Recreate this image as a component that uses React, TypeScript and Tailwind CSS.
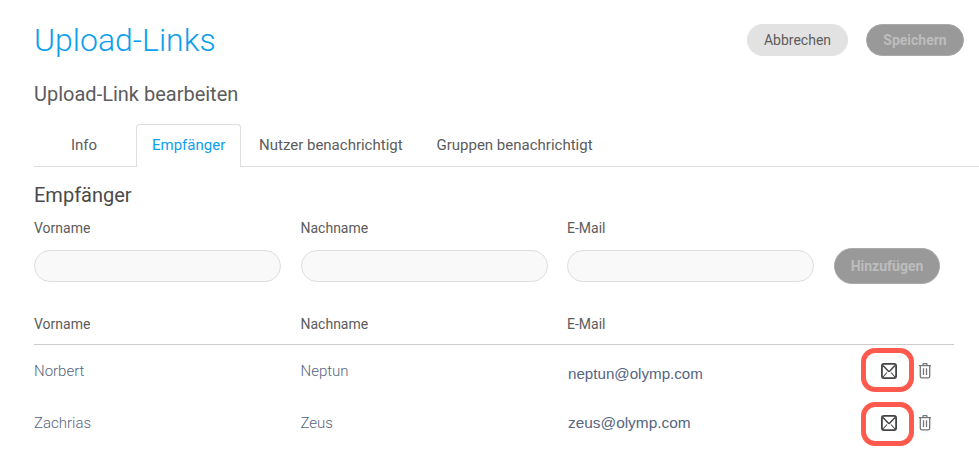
import { useState } from "react";

const tabs = [
  { label: "Info", style: "w-[102px] pl-[37px]" },
  { label: "Empfänger", style: "w-[105px] pl-[15px]" },
  { label: "Nutzer benachrichtigt", style: "w-[177px] pl-[18px]" },
  { label: "Gruppen benachrichtigt", style: "w-[180px] pl-[18.5px]" },
];

const recipients = [
  { first: "Norbert", last: "Neptun", email: "neptun@olymp.com", emailStyle: "pt-1.5 text-[15.15px]", markStyle: "-top-[15px]" },
  { first: "Zachrias", last: "Zeus", email: "zeus@olymp.com", emailStyle: "text-[15.4px]", markStyle: "-top-[13px]" },
];

const columns = ["Vorname", "Nachname", "E-Mail"];

function MailIcon() {
  return (
    <svg className="block h-4 w-4" viewBox="0 0 16 16" fill="none" stroke="#444">
      <rect x="0.9" y="0.9" width="14.2" height="14.2" rx="2" strokeWidth="1.8" />
      <path d="M2 2.5 7.2 8q.8.8 1.6 0L14 2.5" strokeWidth="1.5" />
      <path d="M2 14l4-4.5M14 14l-4-4.5" strokeWidth="1.1" />
    </svg>
  );
}

function TrashIcon() {
  return (
    <svg className="block h-4 w-3" viewBox="0 0 12 16" fill="none" stroke="#777" strokeWidth="1.3">
      <path d="M0 2.6h12M4 2.4V1.2q0-.6.6-.6h2.8q.6 0 .6.6v1.2" />
      <path d="M1.3 2.8v10.4q0 1.7 1.7 1.7h6q1.7 0 1.7-1.7V2.8" />
      <path d="M4.5 5.2v6.8M7.5 5.2v6.8" />
    </svg>
  );
}

export default function App() {
  const [active, setActive] = useState("Empfänger");
  const [form, setForm] = useState<Record<string, string>>({});

  return (
    <div className="h-[459px] w-[979px] overflow-hidden bg-white pl-[34px] font-[Roboto,sans-serif] text-[#5c5c5c]">
      {/* Title and page actions */}
      <header className="flex h-20 items-center pr-[15px]">
        <h1 className="flex-1 text-[32px] leading-10 font-light text-[#0c9fed]">Upload-Links</h1>
        <button className="mr-[18px] h-8 w-[101px] rounded-full bg-[#e2e2e2] text-sm">Abbrechen</button>
        <button className="h-8 w-[98px] rounded-full border border-[#aaa] bg-[#999] text-sm font-bold text-[#bdbdbd]">
          Speichern
        </button>
      </header>

      <h2 className="h-11 pt-0.5 text-xl leading-6">Upload-Link bearbeiten</h2>

      <nav className="flex h-[43px]">
        {tabs.map((tab) => (
          <button
            key={tab.label}
            onClick={() => setActive(tab.label)}
            className={`${tab.style} shrink-0 text-left text-[15px] whitespace-nowrap ${
              active === tab.label
                ? "rounded-t border border-b-0 border-[#dedede] pb-0.5 text-[#0c9fed]"
                : "border-b border-[#dedede]"
            }`}
          >
            {tab.label}
          </button>
        ))}
        <div className="flex-1 border-b border-[#dedede]" />
      </nav>

      <h2 className="h-[51px] pt-4 text-xl leading-6 text-[#4a4a4a]">Empfänger</h2>

      {/* New recipient */}
      <form className="flex h-[66px] gap-[19.5px]" onSubmit={(e) => e.preventDefault()}>
        {columns.map((name) => (
          <label key={name} className="w-[247px] text-sm leading-5">
            {name}
            <input
              value={form[name] ?? ""}
              onChange={(e) => setForm({ ...form, [name]: e.target.value })}
              className="mt-3 block h-8 w-full rounded-full border border-[#dedede] bg-[#f9f9f9] px-4"
            />
          </label>
        ))}
        <button className="mt-[30px] h-9 w-[106px] rounded-full border border-[#aaa] bg-[#999] pl-px text-sm font-bold text-[#bdbdbd]">
          Hinzufügen
        </button>
      </form>

      {/* Recipient list */}
      <div className="mt-[30px] grid h-[31px] w-[920px] grid-cols-[266.5px_266.5px_1fr] border-b border-[#ccc] text-sm leading-5">
        {columns.map((name) => (
          <span key={name}>{name}</span>
        ))}
      </div>
      {recipients.map((person) => (
        <div
          key={person.email}
          className="grid h-[52px] w-[920px] grid-cols-[266.5px_267.5px_294.5px_1fr] items-center text-[15px] text-[#55657f]"
        >
          <span className="font-light">{person.first}</span>
          <span className="font-light">{person.last}</span>
          <span className={`${person.emailStyle} font-['Liberation_Sans',sans-serif]`}>{person.email}</span>
          <span className="flex items-center gap-[21.5px] pl-[18.5px]">
            <button className="relative">
              <MailIcon />
              {/* Highlight around the mail action */}
              <span
                className={`${person.markStyle} absolute -left-5 h-11 w-[53px] rounded-[14px] border-5 border-[#ff5a4d]`}
              />
            </button>
            <button className="-mt-px">
              <TrashIcon />
            </button>
          </span>
        </div>
      ))}
    </div>
  );
}
